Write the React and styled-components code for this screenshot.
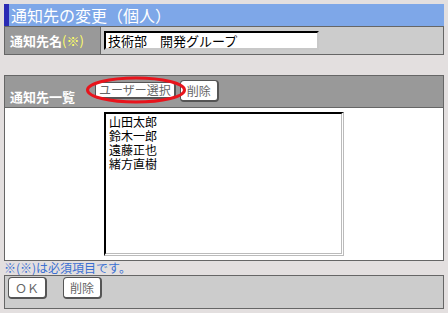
import React from 'react';
import styled, { createGlobalStyle } from 'styled-components';

const GlobalStyle = createGlobalStyle`
  html, body {
    margin: 0;
    padding: 0;
    background: #e3dfdf;
  }
  body {
    font-family: "Noto Sans CJK JP", "DejaVu Sans", sans-serif;
  }
`;

const Page = styled.div`
  width: 440px;
  padding: 4px 4px 0 4px;
  display: flex;
  flex-direction: column;
`;

const Title = styled.h1`
  margin: 0;
  height: 22px;
  box-sizing: border-box;
  border-left: 5px solid #2a2ab4;
  background: #7ea7e8;
  color: #fff;
  font-size: 16px;
  font-weight: normal;
  line-height: 22px;
  padding-left: 2px;
  white-space: nowrap;
`;

const FieldRow = styled.div`
  display: flex;
  height: 29px;
  box-sizing: border-box;
  border: 1px solid #666;
  background: #ccc;
`;

const LabelCell = styled.div`
  width: 96px;
  flex: none;
  background: #999;
  border-right: 1px solid #666;
  display: flex;
  align-items: center;
  padding-left: 5px;
  box-sizing: border-box;
  color: #fff;
  font-size: 13px;
  font-weight: bold;
`;

const Mark = styled.span`
  color: #ffff66;
  font-weight: normal;
`;

const InputCell = styled.div`
  display: flex;
  align-items: center;
  padding-left: 3px;
`;

const TextInput = styled.div`
  width: 215px;
  height: 19px;
  box-sizing: border-box;
  background: #fff;
  border-top: 2px solid #000;
  border-left: 2px solid #000;
  border-right: 2px solid #c8c8c8;
  border-bottom: 2px solid #c8c8c8;
  font-size: 13px;
  line-height: 15px;
  padding-left: 2px;
  white-space: nowrap;
`;

const Spacer = styled.div`
  height: 20px;
`;

const Section = styled.div`
  border: 1px solid #666;
  display: flex;
  flex-direction: column;
`;

const SectionHeader = styled.div`
  height: 31px;
  background: #999;
  border-bottom: 1px solid #666;
  display: flex;
  align-items: flex-start;
  padding-left: 5px;
  position: relative;
`;

const HeaderLabel = styled.span`
  color: #fff;
  font-size: 13px;
  font-weight: bold;
  margin-top: 11px;
  width: 85px;
`;

const Buttons = styled.div`
  display: flex;
  gap: 4px;
  margin-top: 6px;
`;

const Button = styled.button`
  height: ${p => p.tall ? 22 : 17}px;
  margin-top: ${p => p.tall ? -2 : 0}px;
  box-sizing: border-box;
  padding: 0 ${p => p.pad || 6}px;
  background: #fff;
  border: 1px solid #555;
  border-right: 2px solid #555;
  border-bottom: 2px solid #555;
  border-radius: 4px;
  color: #666;
  font-family: inherit;
  font-size: 12px;
  line-height: 14px;
`;

const Ring = styled.svg`
  position: absolute;
  left: 80px;
  top: 0;
  pointer-events: none;
`;

const SectionBody = styled.div`
  height: 152px;
  background: #fff;
  padding: 4px 0 0 99px;
  box-sizing: border-box;
`;

const ListBox = styled.div`
  width: 240px;
  height: 144px;
  box-sizing: border-box;
  background: #fff;
  border-top: 2px solid #000;
  border-left: 2px solid #000;
  border-right: 3px double #bbb;
  border-bottom: 3px double #bbb;
  padding: 1px 0 0 3px;
  font-size: 12px;
  line-height: 14px;
`;

const Note = styled.div`
  color: #3a6fd2;
  font-size: 12px;
  line-height: 14px;
  height: 14px;
  white-space: nowrap;
`;

const Footer = styled.div`
  height: 34px;
  box-sizing: border-box;
  border: 1px solid #666;
  background: #ccc;
  display: flex;
  align-items: flex-start;
  gap: 16px;
  padding: 3px 0 0 3px;
`;

const members = ['山田太郎', '鈴木一郎', '遠藤正也', '緒方直樹'];

const App = () => (
  <>
    <GlobalStyle />
    <Page>
      <Title>通知先の変更（個人）</Title>
      <FieldRow>
        <LabelCell>通知先名<Mark>(※)</Mark></LabelCell>
        <InputCell>
          <TextInput>技術部　開発グループ</TextInput>
        </InputCell>
      </FieldRow>
      <Spacer />
      <Section>
        <SectionHeader>
          <HeaderLabel>通知先一覧</HeaderLabel>
          <Buttons>
            <Button pad={3}>ユーザー選択</Button>
            <Button tall>削除</Button>
          </Buttons>
          <Ring width="102" height="28" viewBox="0 0 102 28">
            <ellipse cx="51" cy="14" rx="48.5" ry="12" fill="none" stroke="#e8141c" strokeWidth="3" />
          </Ring>
        </SectionHeader>
        <SectionBody>
          <ListBox>
            {members.map(m => <div key={m}>{m}</div>)}
          </ListBox>
        </SectionBody>
      </Section>
      <Note>※(※)は必須項目です。</Note>
      <Footer>
        <Button tall>ＯＫ</Button>
        <Button tall>削除</Button>
      </Footer>
    </Page>
  </>
);

export default App;
